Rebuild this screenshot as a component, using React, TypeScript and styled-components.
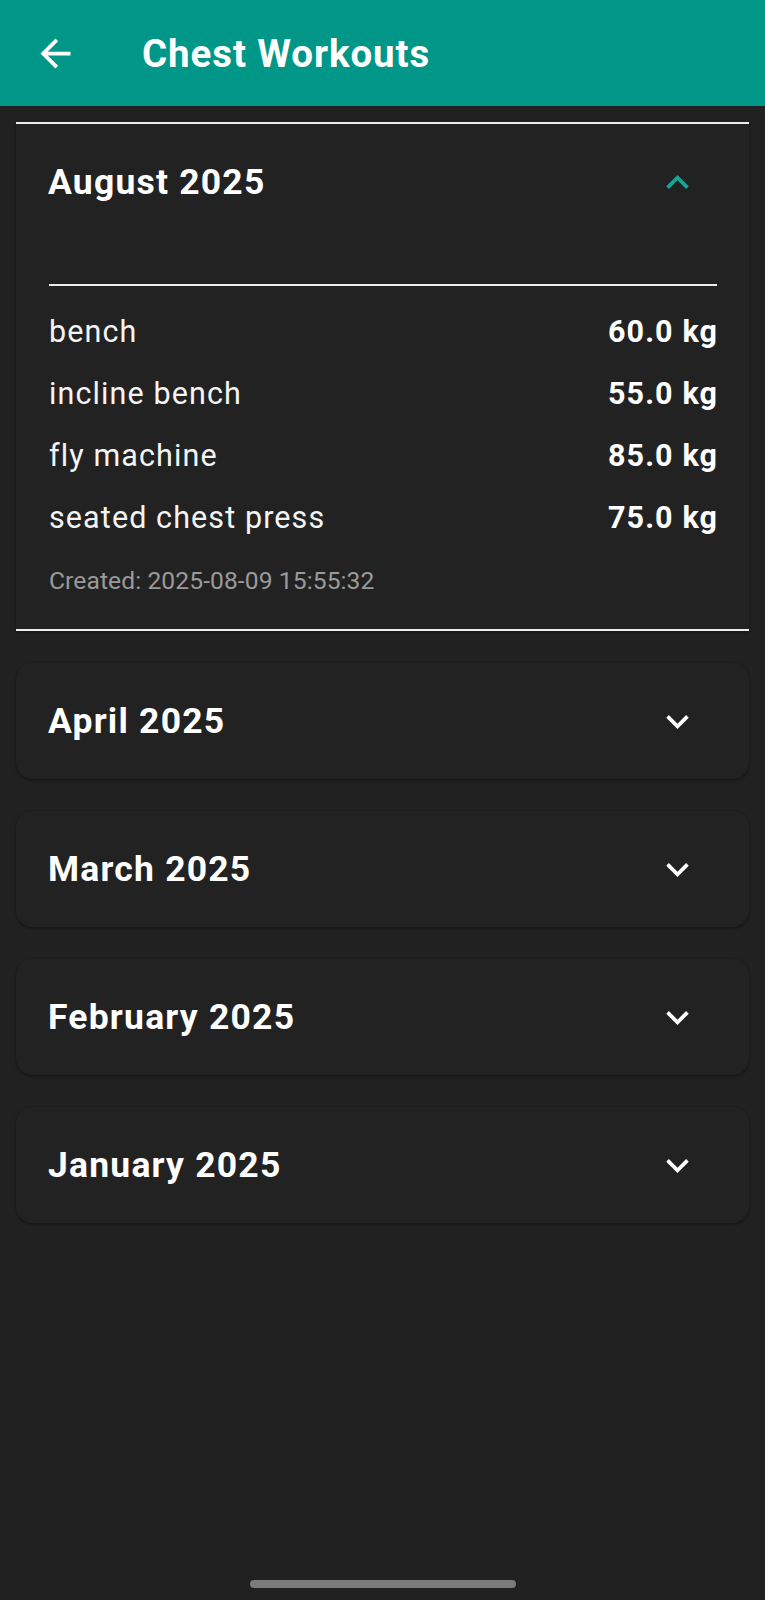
import React from "react";
import styled, { createGlobalStyle } from "styled-components";

const GlobalStyle = createGlobalStyle`
  html, body {
    margin: 0;
    padding: 0;
    background: #212121;
    font-family: Roboto, "Noto Sans", "Liberation Sans", sans-serif;
    -webkit-font-smoothing: antialiased;
  }
  * { box-sizing: border-box; }
`;

const Page = styled.div`
  min-height: 100vh;
  display: flex;
  flex-direction: column;
  background: #212121;
`;

const AppBar = styled.header`
  height: 106px;
  background: #009688;
  display: flex;
  align-items: center;
  flex-shrink: 0;
`;

const BackButton = styled.button`
  width: 45px;
  height: 45px;
  margin-left: 33px;
  padding: 0;
  border: none;
  background: transparent;
  display: flex;
  align-items: center;
  justify-content: center;
  color: #ffffff;
`;

const Title = styled.h1`
  margin: 0 0 0 64px;
  font-size: 38.5px;
  font-weight: 700;
  color: #ffffff;
  letter-spacing: 0.9px;
`;

const List = styled.main`
  display: flex;
  flex-direction: column;
  gap: 32px;
  padding: 16px 16px 0;
`;

const Card = styled.section<{ $open: boolean }>`
  background: #222222;
  border-radius: ${(p) => (p.$open ? "0" : "16px")};
  box-shadow: 0 1px 3px rgba(0, 0, 0, 0.45);
  border-top: ${(p) => (p.$open ? "2px solid #ececec" : "none")};
  border-bottom: ${(p) => (p.$open ? "2px solid #ececec" : "none")};
`;

const Header = styled.div`
  height: 116px;
  display: flex;
  align-items: center;
  justify-content: space-between;
  padding: 0 49px 0 32px;
`;

const Month = styled.h2`
  margin: 0;
  font-size: 35.5px;
  font-weight: 700;
  letter-spacing: 1.2px;
  color: #ffffff;
`;

const Chevron = styled.svg<{ $open: boolean }>`
  width: 45px;
  height: 45px;
  fill: ${(p) => (p.$open ? "#1ba494" : "#ffffff")};
`;

const Body = styled.div`
  padding: 44px 32px 30px 33px;
`;

const Divider = styled.hr`
  margin: 0 0 15px;
  border: none;
  height: 2px;
  background: #ececec;
`;

const Row = styled.div`
  height: 62px;
  display: flex;
  align-items: center;
  justify-content: space-between;
  font-size: 30.5px;
  letter-spacing: 1.1px;
  line-height: 1;
`;

const Exercise = styled.span`
  color: #f4f4f4;
  font-weight: 400;
`;

const Weight = styled.span`
  color: #ffffff;
  font-weight: 700;
  margin-right: -1px;
`;

const Created = styled.div`
  margin-top: 13px;
  font-size: 24.6px;
  letter-spacing: 0.1px;
  line-height: 37px;
  color: #9a9a9a;
`;

const Footer = styled.div`
  margin-top: auto;
  display: flex;
  justify-content: center;
  padding-bottom: 12px;
`;

const Handle = styled.div`
  width: 266px;
  height: 8px;
  border-radius: 4px;
  background: #7b7b7b;
`;

type Entry = { name: string; weight: string };
type MonthData = { label: string; open: boolean; entries: Entry[]; created?: string };

const months: MonthData[] = [
  {
    label: "August 2025",
    open: true,
    entries: [
      { name: "bench", weight: "60.0 kg" },
      { name: "incline bench", weight: "55.0 kg" },
      { name: "fly machine", weight: "85.0 kg" },
      { name: "seated chest press", weight: "75.0 kg" },
    ],
    created: "Created: 2025-08-09 15:55:32",
  },
  { label: "April 2025", open: false, entries: [] },
  { label: "March 2025", open: false, entries: [] },
  { label: "February 2025", open: false, entries: [] },
  { label: "January 2025", open: false, entries: [] },
];

const ArrowBack = () => (
  <svg width="45" height="45" viewBox="0 0 24 24" fill="#ffffff">
    <path d="M20 11H7.83l5.59-5.59L12 4l-8 8 8 8 1.41-1.41L7.83 13H20v-2z" />
  </svg>
);

export default function App() {
  return (
    <Page>
      <GlobalStyle />
      <AppBar>
        <BackButton aria-label="Back">
          <ArrowBack />
        </BackButton>
        <Title>Chest Workouts</Title>
      </AppBar>
      <List>
        {months.map((m) => (
          <Card key={m.label} $open={m.open}>
            <Header>
              <Month>{m.label}</Month>
              <Chevron $open={m.open} viewBox="0 0 24 24">
                {m.open ? (
                  <path d="M12 8l-6 6 1.41 1.41L12 10.83l4.59 4.58L18 14z" />
                ) : (
                  <path d="M16.59 8.59L12 13.17 7.41 8.59 6 10l6 6 6-6z" />
                )}
              </Chevron>
            </Header>
            {m.open && (
              <Body>
                <Divider />
                {m.entries.map((e) => (
                  <Row key={e.name}>
                    <Exercise>{e.name}</Exercise>
                    <Weight>{e.weight}</Weight>
                  </Row>
                ))}
                <Created>{m.created}</Created>
              </Body>
            )}
          </Card>
        ))}
      </List>
      <Footer>
        <Handle />
      </Footer>
    </Page>
  );
}
